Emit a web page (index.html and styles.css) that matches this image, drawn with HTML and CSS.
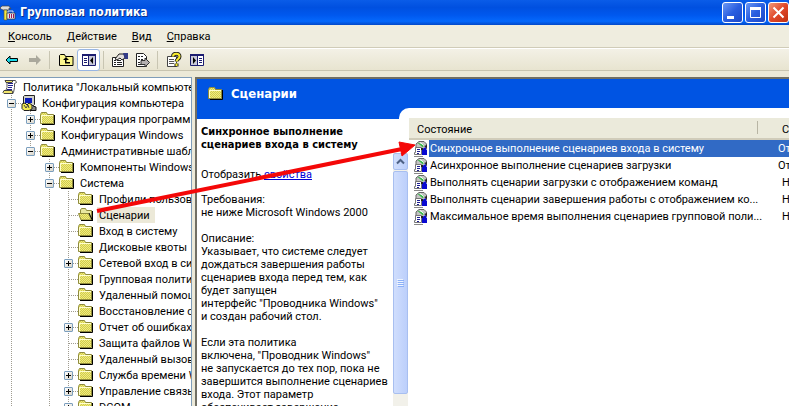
FILE: index.html
```html
<!DOCTYPE html>
<html lang="ru">
<head>
    <meta charset="UTF-8">
    <meta name="viewport" content="width=device-width, initial-scale=1.0">
    <title>Групповая политика</title>
    <link rel="stylesheet" href="styles.css">
</head>
<body>
    <!-- shared icons -->
    <svg class="sprite" aria-hidden="true">
        <defs>
            <pattern id="dither" width="2" height="2" patternUnits="userSpaceOnUse">
                <rect width="2" height="2" fill="#f0ec80"/>
                <rect width="1" height="1" fill="#d2cc4c"/>
                <rect x="1" y="1" width="1" height="1" fill="#d2cc4c"/>
            </pattern>
        </defs>
        <symbol id="folder" viewBox="0 0 16 16">
            <path d="M2 13.5h12.500V4" fill="none" stroke="#000"/>
            <path d="M.5 12.500V3.500l1-2h5l1 2h6v9z" fill="url(#dither)" stroke="#8f8b3c"/>
            <path d="M1.500 12V4.500h11.500" fill="none" stroke="#fffed0"/>
        </symbol>
        <symbol id="folder-open" viewBox="0 0 16 16">
            <path d="M2.500 6V3l1-1.500h4l1 2h5v9" fill="#e9e8a0" stroke="#8f8b3c"/>
            <path d="M.5 6.500h10l3 6.500H3z" fill="url(#dither)" stroke="#8f8b3c"/>
            <path d="M11 6l3.500 7.500V4M3 13.500h12" fill="none" stroke="#000"/>
        </symbol>
        <symbol id="setting" viewBox="0 0 16 16">
            <path d="M3 7V3l3-2.500h5L13.500 3v5" fill="#c4c4c4" stroke="#666"/>
            <path d="M4 1.500l6 5 1-3z" fill="#38b848"/>
            <path d="M7 1.500l4 3" stroke="#fff"/>
            <path d="M2.500 6.500h6v7h-7v-2h1z" fill="#fff" stroke="#777"/>
            <path d="M4 8.500h3M4 10.500h3M4 12.500h2" stroke="#1c1c90"/>
            <path d="M9 8l4-2v3l1-1v6H9z" fill="#0808d0"/>
            <path d="M8 7h2v2H8zM11 5l3-1v3z" fill="#222"/>
            <path d="M1 15.500h9" stroke="#888"/>
        </symbol>
    </svg>

    <div class="window">
        <header class="titlebar">
            <svg class="app-icon" viewBox="0 0 16 16">
                <path d="M0 3l2-2h7l2 3-2-1v2H3L1 4z" fill="#ddd" stroke="#444" stroke-width=".7"/>
                <path d="M4 5h3v10H4z" fill="#f5e93c" stroke="#555" stroke-width=".7"/>
                <path d="M8 8V6h5v2" fill="none" stroke="#ddd"/>
                <path d="M7 8h8v6H7z" fill="#e6e6ee" stroke="#333" stroke-width=".7"/>
                <path d="M9.500 9v4M11.500 9v4M13.500 9v4" stroke="#a01850"/>
            </svg>
            <h1>Групповая политика</h1>
            <div class="window-buttons">
                <button type="button" aria-label="Свернуть"><svg viewBox="0 0 21 21"><path d="M5 15.500h7" stroke="#fff" stroke-width="3"/></svg></button>
                <button type="button" aria-label="Развернуть"><svg viewBox="0 0 21 21"><path d="M5.500 6v9.500h10V6" fill="none" stroke="#fff"/><path d="M5 6.500h11" stroke="#fff" stroke-width="3"/></svg></button>
                <button type="button" class="close" aria-label="Закрыть"><svg viewBox="0 0 21 21"><path d="M5.500 5.500l10 10M15.500 5.500l-10 10" stroke="#fff" stroke-width="2"/></svg></button>
            </div>
        </header>

        <nav class="menubar">
            <button type="button"><u>К</u>онсоль</button>
            <button type="button"><u>Д</u>ействие</button>
            <button type="button"><u>В</u>ид</button>
            <button type="button"><u>С</u>правка</button>
        </nav>

        <div class="toolbar">
            <button type="button" aria-label="Назад"><svg viewBox="0 0 16 16"><path d="M2 8l4-4v2.500h7.500v3H6V12z" fill="#18d8e8" stroke="#000"/></svg></button>
            <button type="button" aria-label="Вперед"><svg viewBox="0 0 16 16"><path d="M14 8l-5-5v3H2v4h7v3z" fill="#aaa89c"/></svg></button>
            <span class="divider"></span>
            <button type="button" aria-label="На уровень вверх"><svg viewBox="0 0 16 16"><path d="M1.500 13.500v-10l1-1h4l1 2h7.500v9z" fill="#fbf58c" stroke="#000"/><path d="M8 5L5 8h2v3.500h5v-1.500H8.500V8H11z" fill="#000"/></svg></button>
            <button type="button" class="pressed" aria-label="Дерево консоли"><svg viewBox="0 0 16 16"><path d="M1.500 2.500h13v11h-13z" fill="#fff" stroke="#1c1c70"/><path d="M1 3h14" stroke="#1c1c70" stroke-width="2"/><path d="M8 4h6v9H8z" fill="#c8c8d8"/><path d="M7.500 4v9" stroke="#1c1c70"/><path d="M3 6.500h3M3 8.500h3M3 10.500h3" stroke="#1c1c70"/><path d="M12 5v7L9 8.500z" fill="#000"/></svg></button>
            <span class="divider"></span>
            <button type="button" aria-label="Свойства"><svg viewBox="0 0 16 16"><path d="M.5 5.500h11v9H.5z" fill="#fff" stroke="#222"/><path d="M2 8.500h2M5 8.500h4M2 10.500h2M5 10.500h5M2 12.500h2M5 12.500h5" stroke="#222"/><path d="M3 7l4-5h5l1 4-3 2-2-2-3 2z" fill="#e4e0dc" stroke="#222"/><path d="M11 1h5v6h-3z" fill="#343c88"/></svg></button>
            <button type="button" aria-label="Экспорт списка"><svg viewBox="0 0 16 16"><path d="M1.500 1.500h7l3 3v10h-10z" fill="#fff" stroke="#222"/><path d="M3 4.500h2M3 7.500h2M3 10.500h2M6 4.500h2M6 7.500h2M3 12.500h5" stroke="#222"/><path d="M6 8.500h4V6l4.500 4.500L10 15v-2.500H6z" fill="#b4b0b0" stroke="#333"/></svg></button>
            <span class="divider"></span>
            <button type="button" aria-label="Справка"><svg viewBox="0 0 16 16"><path d="M1.500 4.500h9v10h-9z" fill="#fff" stroke="#444"/><path d="M3 7.500h5M3 9.500h5M3 11.500h5" stroke="#555"/><path d="M7 4.500C7 .8 13.500.8 13.500 4.500c0 2.500-3 2.500-3 5M10.500 11.500v3" fill="none" stroke="#222" stroke-width="4"/><path d="M7 4.500C7 .8 13.500.8 13.500 4.500c0 2.500-3 2.500-3 5M10.500 11.500v2.500" fill="none" stroke="#f8ec30" stroke-width="2"/></svg></button>
            <button type="button" aria-label="Область действий"><svg viewBox="0 0 16 16"><path d="M1.500 2.500h13v11h-13z" fill="#fff" stroke="#1c1c70"/><path d="M1 3h14" stroke="#1c1c70" stroke-width="2"/><path d="M2 4h6v9H2z" fill="#c8c8d8"/><path d="M8.500 4v9" stroke="#1c1c70"/><path d="M10 6.500h3M10 8.500h3M10 10.500h3" stroke="#1c1c70"/><path d="M4 5v7l3-3.500z" fill="#000"/></svg></button>
        </div>

        <main class="panes">
            <aside class="tree">
                <div class="node root">
                    <svg class="icon" viewBox="0 0 16 16"><path d="M4 1.500h9.500l1 2-2 1v4l-1 5H3l2-5V4z" fill="#fff" stroke="#555"/><path d="M6 4.500h5M6 6.500h5M6 8.500h4M5 10.500h5" stroke="#22228c"/><path d="M2 11.500h8l1 3H2l-1-1zM3 1.500h8l-1 2H4z" fill="#f1e66c" stroke="#444"/></svg>
                    <span class="label">Политика "Локальный компьютер"</span>
                </div>
                <ul>
                    <li class="open">
                        <div class="node">
                            <button type="button" class="toggle minus" aria-label="Свернуть"></button>
                            <svg class="icon" viewBox="0 0 16 16"><path d="M2.500 1.500l1-1h10v9l-1 1h-10z" fill="#d0d0c8" stroke="#222"/><path d="M4 3h7v5H4z" fill="#0c1cb8"/><path d="M12 11l3 1v3.500H9" fill="#888" stroke="#111"/><path d="M1 9l3-1 2 2 2-2 3 2v4l-3 1.500H3l-2-2z" fill="#f2e850" stroke="#222"/><path d="M3 10l2 3 2-3 1 3" fill="none" stroke="#444"/></svg>
                            <span class="label">Конфигурация компьютера</span>
                        </div>
                        <ul>
                            <li><div class="node"><button type="button" class="toggle" aria-label="Развернуть"></button><svg class="icon"><use href="#folder"/></svg><span class="label">Конфигурация программ</span></div></li>
                            <li><div class="node"><button type="button" class="toggle" aria-label="Развернуть"></button><svg class="icon"><use href="#folder"/></svg><span class="label">Конфигурация Windows</span></div></li>
                            <li>
                                <div class="node"><button type="button" class="toggle minus" aria-label="Свернуть"></button><svg class="icon"><use href="#folder"/></svg><span class="label">Административные шаблоны</span></div>
                                <ul>
                                    <li><div class="node"><button type="button" class="toggle" aria-label="Развернуть"></button><svg class="icon"><use href="#folder"/></svg><span class="label">Компоненты Windows</span></div></li>
                                    <li class="open">
                                        <div class="node"><button type="button" class="toggle minus" aria-label="Свернуть"></button><svg class="icon"><use href="#folder"/></svg><span class="label">Система</span></div>
                                        <ul>
                                            <li><div class="node leaf"><svg class="icon"><use href="#folder"/></svg><span class="label">Профили пользователей</span></div></li>
                                            <li><div class="node leaf"><svg class="icon"><use href="#folder-open"/></svg><span class="label current">Сценарии</span></div></li>
                                            <li><div class="node leaf"><svg class="icon"><use href="#folder"/></svg><span class="label">Вход в систему</span></div></li>
                                            <li><div class="node leaf"><svg class="icon"><use href="#folder"/></svg><span class="label">Дисковые квоты</span></div></li>
                                            <li><div class="node"><button type="button" class="toggle" aria-label="Развернуть"></button><svg class="icon"><use href="#folder"/></svg><span class="label">Сетевой вход в систему</span></div></li>
                                            <li><div class="node leaf"><svg class="icon"><use href="#folder"/></svg><span class="label">Групповая политика</span></div></li>
                                            <li><div class="node leaf"><svg class="icon"><use href="#folder"/></svg><span class="label">Удаленный помощник</span></div></li>
                                            <li><div class="node leaf"><svg class="icon"><use href="#folder"/></svg><span class="label">Восстановление системы</span></div></li>
                                            <li><div class="node"><button type="button" class="toggle" aria-label="Развернуть"></button><svg class="icon"><use href="#folder"/></svg><span class="label">Отчет об ошибках</span></div></li>
                                            <li><div class="node leaf"><svg class="icon"><use href="#folder"/></svg><span class="label">Защита файлов Windows</span></div></li>
                                            <li><div class="node leaf"><svg class="icon"><use href="#folder"/></svg><span class="label">Удаленный вызов процедур</span></div></li>
                                            <li><div class="node"><button type="button" class="toggle" aria-label="Развернуть"></button><svg class="icon"><use href="#folder"/></svg><span class="label">Служба времени Windows</span></div></li>
                                            <li><div class="node"><button type="button" class="toggle" aria-label="Развернуть"></button><svg class="icon"><use href="#folder"/></svg><span class="label">Управление связью</span></div></li>
                                            <li class="open"><div class="node"><button type="button" class="toggle" aria-label="Развернуть"></button><svg class="icon"><use href="#folder"/></svg><span class="label">DCOM</span></div></li>
                                        </ul>
                                    </li>
                                </ul>
                            </li>
                        </ul>
                    </li>
                </ul>
            </aside>

            <section class="details">
                <div class="banner">
                    <svg class="icon"><use href="#folder"/></svg>
                    <h2>Сценарии</h2>
                </div>
                <div class="content">
                    <div class="description">
                        <h3>Синхронное выполнение<br>сценариев входа в систему</h3>
                        <div class="scroll-area">
                            <div class="text">
                                <p class="show">Отобразить <a href="#">свойства</a></p>
                                <p>Требования:<br>не ниже Microsoft Windows 2000</p>
                                <p>Описание:<br>Указывает, что системе следует<br>дождаться завершения работы<br>сценариев входа перед тем, как<br>будет запущен<br>интерфейс "Проводника Windows"<br>и создан рабочий стол.</p>
                                <p>Если эта политика<br>включена, "Проводник Windows"<br>не запускается до тех пор, пока не<br>завершится выполнение сценариев<br>входа. Этот параметр<br>обеспечивает завершение</p>
                            </div>
                            <div class="scrollbar">
                                <button type="button" aria-label="Вверх"><svg viewBox="0 0 13 15"><path d="M3 9.500L6.500 6 10 9.500" fill="none" stroke="#4d6185" stroke-width="2"/></svg></button>
                                <div class="thumb"><svg viewBox="0 0 7 8"><path d="M0 .5h6M0 2.500h6M0 4.500h6M0 6.500h6" stroke="#eef4fe"/><path d="M1 1.500h6M1 3.500h6M1 5.500h6M1 7.500h6" stroke="#8cb0f8"/></svg></div>
                            </div>
                        </div>
                    </div>
                    <div class="list">
                        <table>
                            <thead>
                                <tr><th class="name">Состояние</th><th class="state">Состояние</th></tr>
                            </thead>
                            <tbody>
                                <tr class="selected"><td><svg class="icon"><use href="#setting"/></svg><span>Синхронное выполнение сценариев входа в систему</span></td><td class="off">Отключена</td></tr>
                                <tr><td><svg class="icon"><use href="#setting"/></svg><span>Асинхронное выполнение сценариев загрузки</span></td><td class="off">Отключена</td></tr>
                                <tr><td><svg class="icon"><use href="#setting"/></svg><span>Выполнять сценарии загрузки с отображением команд</span></td><td>Не задана</td></tr>
                                <tr><td><svg class="icon"><use href="#setting"/></svg><span>Выполнять сценарии завершения работы с отображением ко...</span></td><td>Не задана</td></tr>
                                <tr><td><svg class="icon"><use href="#setting"/></svg><span>Максимальное время выполнения сценариев групповой поли...</span></td><td>Не задана</td></tr>
                            </tbody>
                        </table>
                    </div>
                </div>
            </section>
        </main>

        <!-- arrow from the tree to the selected policy -->
        <svg class="pointer" viewBox="0 0 320 72" aria-hidden="true">
            <path d="M1 68L306 6" stroke="#f40808" stroke-width="4"/>
            <path d="M319 2L303 -1l3 14z" fill="#f40808" stroke="#f40808"/>
        </svg>
    </div>
</body>
</html>
```
FILE: styles.css
```css
* {
    margin: 0;
    padding: 0;
    box-sizing: border-box;
}

body {
    height: 100vh;
    overflow: hidden;
    font-family: Roboto, Tahoma, sans-serif;
    font-size: 11px;
    line-height: 13px;
    color: #000;
    background-color: #ece9d8;
}

h1,
h2,
h3 {
    font-family: "DejaVu Sans Condensed", Tahoma, sans-serif;
}

button {
    border: none;
    background: none;
    font: inherit;
}

svg {
    display: block;
    flex: none;
}

.sprite {
    position: absolute;
    width: 0;
    height: 0;
}

.icon {
    width: 16px;
    height: 16px;
}

.window {
    position: relative;
    height: 100vh;
    display: flex;
    flex-direction: column;
}

/* title bar */
.titlebar {
    height: 25px;
    display: flex;
    align-items: center;
    gap: 4px;
    flex: none;
    background: linear-gradient(#0a5ce8, #0050e0 30%, #0058ee 60%, #0468fc 85%, #0348c8);
}

.app-icon {
    width: 16px;
    height: 16px;
}

.titlebar h1 {
    flex: 1;
    font-size: 12px;
    color: #fff;
    text-shadow: 1px 1px #0a2f8a;
}

.window-buttons {
    display: flex;
    gap: 2px;
}

.window-buttons button {
    width: 21px;
    height: 21px;
    border: 1px solid #fff;
    border-radius: 3px;
    background: linear-gradient(135deg, #6c98f4, #2a5ee0 50%, #1c48c8);
}

.window-buttons svg {
    width: 21px;
    height: 21px;
    margin: -1px;
}

.window-buttons .close {
    background: linear-gradient(135deg, #f09878, #e0482a 50%, #c03010);
}

/* menu and toolbar */
.menubar {
    height: 23px;
    padding: 0 8px;
    display: flex;
    align-items: center;
    gap: 15px;
    flex: none;
    background-color: #efeddf;
    border-bottom: 1px solid #d0ccb8;
}

.toolbar {
    height: 23px;
    display: flex;
    align-items: center;
    flex: none;
    background: linear-gradient(#f3f1e6, #e8e4d0);
    border-top: 1px solid #fff;
    border-bottom: 1px solid #c8c4b0;
}

.toolbar button {
    width: 23px;
    height: 22px;
    display: flex;
    align-items: center;
    justify-content: center;
}

.toolbar svg {
    width: 16px;
    height: 16px;
}

.toolbar .pressed {
    border: 1px solid #98b5e2;
    border-radius: 3px;
    background-color: #fff;
}

.divider {
    width: 1px;
    height: 18px;
    margin: 0 4px 0 3px;
    background-color: #c8c5b2;
}

/* panes */
.panes {
    flex: 1;
    min-height: 0;
    margin-top: 6px;
    display: flex;
    gap: 3px;
}

.tree {
    width: 192px;
    flex: none;
    padding: 1px 0 0 2px;
    overflow: hidden;
    background-color: #fff;
    border-top: 1px solid #7f9db9;
    border-right: 1px solid #7f9db9;
}

.tree ul {
    list-style: none;
}

.tree ul ul {
    margin-left: 19px;
}

/* dotted guide down the middle of the toggle column */
.tree li {
    background: repeating-linear-gradient(#a09c90 0 1px, transparent 1px 2px) 9px 0 / 1px 100% no-repeat;
}

.tree li:last-child {
    background-size: 1px 8px;
}

.tree li.open {
    background-size: 1px 100%;
}

.node {
    height: 16px;
    display: flex;
    align-items: center;
    white-space: nowrap;
    background: repeating-linear-gradient(90deg, #a09c90 0 1px, transparent 1px 2px) 10px 8px / 9px 1px no-repeat;
}

.node.root {
    background: none;
}

.leaf {
    padding-left: 19px;
}

.toggle {
    width: 9px;
    height: 9px;
    margin: 0 5px;
    flex: none;
    border: 1px solid #7b9ebd;
    border-radius: 1px;
    background:
        linear-gradient(#000, #000) center / 5px 1px no-repeat,
        linear-gradient(#000, #000) center / 1px 5px no-repeat,
        linear-gradient(135deg, #fff, #d8d4c8);
}

.toggle.minus {
    background:
        linear-gradient(#000, #000) center / 5px 1px no-repeat,
        linear-gradient(135deg, #fff, #d8d4c8);
}

.label {
    height: 16px;
    padding: 2px 5px 1px 2px;
    margin-left: 3px;
}

.current {
    background-color: #ece9d8;
}

.details {
    flex: 1;
    min-width: 0;
    display: flex;
    flex-direction: column;
    border-top: 2px solid #716f64;
    border-left: 2px solid #716f64;
    background-color: #0054e3;
}

.banner {
    height: 29px;
    padding: 0 11px;
    display: flex;
    align-items: center;
    gap: 7px;
    flex: none;
}

.banner h2 {
    font-size: 13px;
    color: #fff;
}

.content {
    flex: 1;
    min-height: 0;
    display: flex;
}

/* sits over the rounded corner of the list */
.description {
    position: relative;
    z-index: 1;
    width: 211px;
    flex: none;
    margin-top: 11px;
    display: flex;
    flex-direction: column;
    background-color: #fff;
}

.description h3 {
    height: 34px;
    padding: 6px 4px 0;
    flex: none;
    font-size: 11px;
    white-space: nowrap;
}

.scroll-area {
    flex: 1;
    min-height: 0;
    display: flex;
}

.text {
    flex: 1;
    padding: 15px 0 0 4px;
    overflow: hidden;
    white-space: nowrap;
}

.text p {
    margin-bottom: 13px;
}

.text .show {
    margin-bottom: 12px;
}

.text a {
    color: #0000d8;
}

.scrollbar {
    width: 15px;
    padding-bottom: 12px;
    display: flex;
    flex-direction: column;
    gap: 1px;
    background-color: #f2f1ea;
}

.scrollbar button,
.thumb {
    border: 1px solid #a8bff0;
    border-radius: 2px;
    background: linear-gradient(90deg, #d0defd, #bccffb);
}

.scrollbar button {
    height: 17px;
}

.scrollbar button svg {
    width: 13px;
    height: 15px;
}

.thumb {
    flex: 1;
    display: flex;
    align-items: center;
    justify-content: center;
}

.thumb svg {
    width: 7px;
    height: 8px;
}

/* policy list */
.list {
    flex: 1;
    min-width: 0;
    margin-left: -9px;
    padding: 10px 0 0 10px;
    background-color: #fff;
    border-top-left-radius: 10px;
    overflow: hidden;
}

table {
    width: 100%;
    table-layout: fixed;
    border-collapse: collapse;
}

th {
    height: 21px;
    padding: 2px 0 0 8px;
    font-weight: normal;
    text-align: left;
    overflow: hidden;
    white-space: nowrap;
    background-color: #ebeadb;
    border-bottom: 2px solid #d0ccba;
}

.name {
    width: 349px;
    background-image: linear-gradient(#b8b5a4, #b8b5a4);
    background-position: right 3px;
    background-size: 1px 13px;
    background-repeat: no-repeat;
}

.state {
    padding-left: 24px;
}

td {
    height: 17px;
    padding-left: 24px;
    overflow: hidden;
    white-space: nowrap;
}

td.off {
    padding-left: 20px;
}

td:first-child {
    display: flex;
    align-items: center;
    padding-left: 4px;
    overflow: visible;
}

td span {
    flex: 1;
    padding: 2px 0 2px 1px;
}

.selected td {
    color: #fff;
    background-color: #316ac5;
}

.selected td:first-child {
    background: linear-gradient(#316ac5, #316ac5) 20px 0 no-repeat;
}

.pointer {
    position: absolute;
    z-index: 2;
    left: 96px;
    top: 143px;
    width: 320px;
    height: 72px;
    overflow: visible;
    pointer-events: none;
}
```
